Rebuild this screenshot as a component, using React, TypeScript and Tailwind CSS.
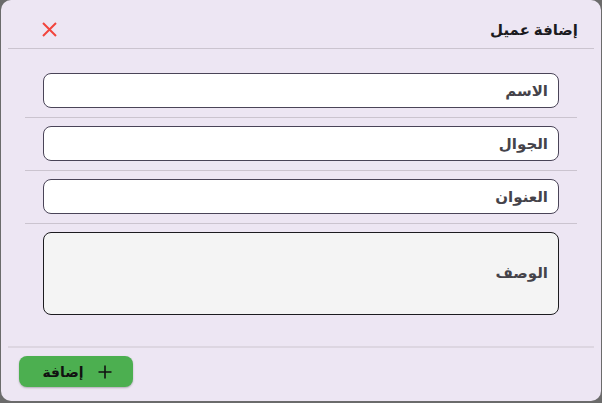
import React from "react";

const font = { fontFamily: '"Noto Sans", "DejaVu Sans", sans-serif' };

function Field({ label, tall }: { label: string; tall?: boolean }) {
  return (
    <div className="px-[18px] pt-[8px] pb-[9px]">
      {tall ? (
        <div className="h-[83px] rounded-[8px] border border-[#1c1b1f] bg-[#f4f4f4] flex items-center pr-[10px] pb-[2px]">
          <span className="text-[15px] font-bold text-[#45434a]">{label}</span>
        </div>
      ) : (
        <div className="h-[35px] rounded-[8px] border border-[#4a4458] bg-white flex items-center pr-[10px]">
          <span className="text-[15px] font-bold text-[#45434a]">{label}</span>
        </div>
      )}
    </div>
  );
}

export default function App() {
  return (
    <div className="w-[602px] h-[403px] bg-[#6b6b6b] pl-[1px]" style={font}>
      <div dir="rtl" className="w-[600px] h-[401px] rounded-[10px] bg-[#ede6f3] flex flex-col overflow-hidden">
        <div className="h-[48px] pt-[10px] flex items-center justify-between pr-[23px] pl-[41px]">
          <span className="text-[15px] font-bold text-[#1c1b1f]">إضافة عميل</span>
          <svg width="15" height="15" viewBox="0 0 15 15" fill="none">
            <path d="M1 1L14 14M14 1L1 14" stroke="#f2453d" strokeWidth="2" />
          </svg>
        </div>
        <div className="mx-[7px] h-px bg-[#cbc4cf]" />
        <div className="px-[24px] pt-[16px] flex flex-col">
          <Field label="الاسم" />
          <div className="h-px bg-[#cbc4cf]" />
          <Field label="الجوال" />
          <div className="h-px bg-[#cbc4cf]" />
          <Field label="العنوان" />
          <div className="h-px bg-[#cbc4cf]" />
          <Field label="الوصف" tall />
        </div>
        <div className="mt-auto">
          <div className="mx-[7px] h-[2px] bg-[#ddd6e1]" />
          <div className="pt-[8px] pb-[14px] pl-[18px] flex justify-end">
            <button className="w-[114px] h-[31px] rounded-[8px] bg-[#4caf50] shadow-[0_1px_2px_rgba(0,0,0,0.25)] flex items-center justify-center gap-[14px] pl-[2px]">
              <svg width="14" height="14" viewBox="0 0 14 14">
                <path d="M7 0.5V13.5M0.5 7H13.5" stroke="#111" strokeWidth="1.6" />
              </svg>
              <span className="text-[14px] font-bold text-[#111]">إضافة</span>
            </button>
          </div>
        </div>
      </div>
    </div>
  );
}
